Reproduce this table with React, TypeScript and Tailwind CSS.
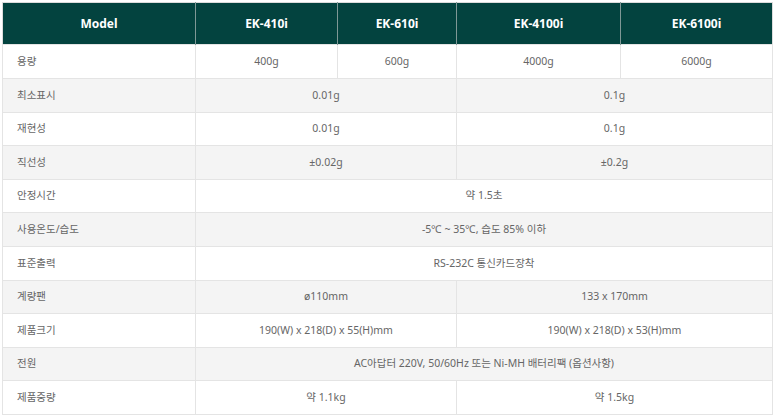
const rows: { label: string; h: string; cells: { text: string; span: number }[] }[] = [
  { label: "용량", h: "h-[34px]", cells: [{ text: "400g", span: 1 }, { text: "600g", span: 1 }, { text: "4000g", span: 1 }, { text: "6000g", span: 1 }] },
  { label: "최소표시", h: "h-[34px]", cells: [{ text: "0.01g", span: 2 }, { text: "0.1g", span: 2 }] },
  { label: "재현성", h: "h-[33px]", cells: [{ text: "0.01g", span: 2 }, { text: "0.1g", span: 2 }] },
  { label: "직선성", h: "h-[34px]", cells: [{ text: "±0.02g", span: 2 }, { text: "±0.2g", span: 2 }] },
  { label: "안정시간", h: "h-[33px]", cells: [{ text: "약 1.5초", span: 4 }] },
  { label: "사용온도/습도", h: "h-[34px]", cells: [{ text: "-5℃ ~ 35℃, 습도 85% 이하", span: 4 }] },
  { label: "표준출력", h: "h-[34px]", cells: [{ text: "RS-232C 통신카드장착", span: 4 }] },
  { label: "계량팬", h: "h-[33px]", cells: [{ text: "ø110mm", span: 2 }, { text: "133 x 170mm", span: 2 }] },
  { label: "제품크기", h: "h-[34px]", cells: [{ text: "190(W) x 218(D) x 55(H)mm", span: 2 }, { text: "190(W) x 218(D) x 53(H)mm", span: 2 }] },
  { label: "전원", h: "h-[33px]", cells: [{ text: "AC아답터 220V, 50/60Hz 또는 Ni-MH 배터리팩 (옵션사항)", span: 4 }] },
  { label: "제품중량", h: "h-[34px]", cells: [{ text: "약 1.1kg", span: 2 }, { text: "약 1.5kg", span: 2 }] },
];

const models = ["EK-410i", "EK-610i", "EK-4100i", "EK-6100i"];

export default function App() {
  return (
    <div className="bg-white pl-[2px] pt-[2px] font-['Noto_Sans','Noto_Sans_CJK_KR',sans-serif]">
      <table className="w-[770px] table-fixed border-collapse border border-[#dcdcdc]">
        <colgroup>
          <col className="w-[193px]" />
          <col className="w-[142px]" />
          <col className="w-[119px]" />
          <col className="w-[164px]" />
          <col className="w-[152px]" />
        </colgroup>
        <thead>
          <tr className="bg-[#03433f]">
            <th className="h-[42px] border-r border-[#7f9896] text-[12px] font-bold text-white">Model</th>
            {models.map((m, i) => (
              <th
                key={m}
                className={`h-[42px] text-[12px] font-bold text-white ${i < 3 ? "border-r border-[#7f9896]" : ""}`}
              >
                {m}
              </th>
            ))}
          </tr>
        </thead>
        <tbody>
          {rows.map((r, i) => (
            <tr key={r.label} className={i % 2 === 1 ? "bg-[#f4f4f4]" : "bg-white"}>
              <td className={`${r.h} border border-[#e4e4e4] pl-[14px] text-left text-[10.5px] text-[#666]`}>
                {r.label}
              </td>
              {r.cells.map((c, j) => (
                <td
                  key={j}
                  colSpan={c.span}
                  className={`${r.h} border border-[#e4e4e4] text-center text-[10.5px] text-[#666]`}
                >
                  {c.text}
                </td>
              ))}
            </tr>
          ))}
        </tbody>
      </table>
    </div>
  );
}
